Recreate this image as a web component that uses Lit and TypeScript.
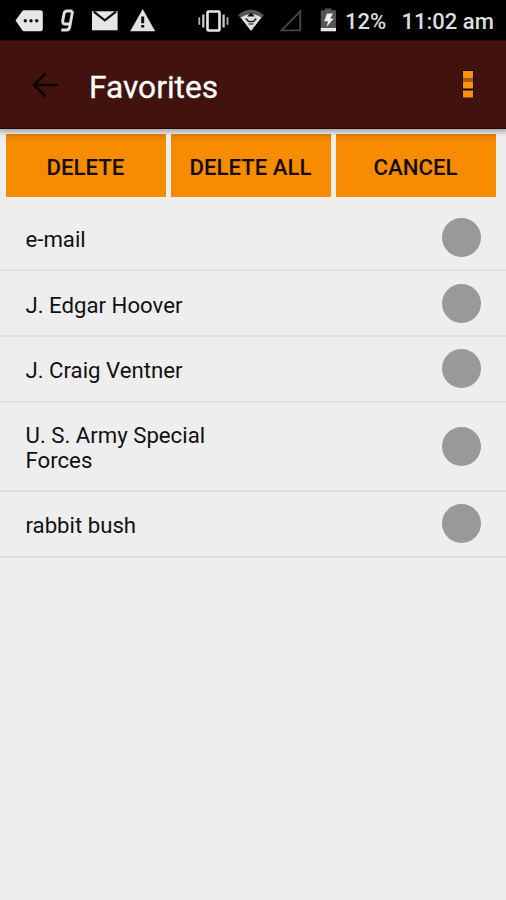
import { LitElement, html, css, svg } from "lit";
import { customElement, property } from "lit/decorators.js";

@customElement("status-bar")
class StatusBar extends LitElement {
  static styles = css`
    :host {
      display: flex;
      height: 40px;
      background: #000;
      color: #dedede;
      font: 500 22px/40px Roboto, sans-serif;
    }
    svg { display: block; flex: none; }
    .left { width: 190px; }
    .right { width: 155px; }
    .battery,
    .time {
      box-sizing: border-box;
      height: 40px;
      padding-top: 3px;
      line-height: 38px;
      white-space: nowrap;
    }
    .battery { width: 56.500px; }
  `;

  private notifications() {
    return svg`
      <path d="M15.500 20.500 L22.500 10.800 Q23 10.300 24 10.300 H40.500 Q42.800 10.300 42.800 12.500 V29 Q42.800 31.200 40.500 31.200 H24 Q23 31.200 22.500 30.500 Z" fill="#e6e6e6"/>
      <circle cx="25.300" cy="20.700" r="1.700" fill="#111"/>
      <circle cx="31" cy="20.700" r="1.700" fill="#111"/>
      <circle cx="36.700" cy="20.700" r="1.700" fill="#111"/>
      <path d="M72.600 11 H67 Q64.500 11 64 14 L62.800 20.500 Q62.300 24 65 24 H70.300 M72.600 11 L69.700 27 Q69.100 30 66.500 30 H61.300" fill="none" stroke="#e0e0e0" stroke-width="2.900"/>
      <rect x="92" y="11.300" width="25.600" height="19" fill="#e6e6e6"/>
      <path d="M93.700 11.700 L104.800 20.300 L116 11.700" fill="none" stroke="#111" stroke-width="2.300"/>
      <path d="M142.700 9.500 L154.800 31 H130.600 Z" fill="#e4e4e4" stroke="#e4e4e4" stroke-width=".5"/>
      <path d="M142.700 16.500 V23.300 M142.700 25 V27.500" stroke="#111" stroke-width="3"/>`;
  }

  private system() {
    return svg`
      <rect x="207.500" y="11.500" width="12" height="19" rx="1" fill="none" stroke="#e6e6e6" stroke-width="2.600"/>
      <path d="M203.300 14.500 V27.500 M223.600 14.500 V27.500" stroke="#c8c8c8" stroke-width="2.300"/>
      <path d="M199.300 17.300 V24.700 M227.500 17.300 V24.700" stroke="#b5b5b5" stroke-width="1.800"/>
      <path d="M238 15 Q251 4.500 264 15 L261.300 18 Q251 10.500 240.700 18 Z" fill="#575757"/>
      <path d="M240.500 17.500 Q251 10.500 261.500 17.500 L251 31 Z" fill="#dedede"/>
      <path d="M251 12.500 L254.800 16.500 H247.200 Z" fill="#111"/>
      <path d="M245.800 18.500 L248.500 21.500 H253.500 L256.200 18.500" fill="none" stroke="#222" stroke-width="1.600"/>
      <path d="M248.500 24 H253.500" stroke="#333" stroke-width="1.200"/>
      <path d="M281.500 30.400 L300.200 11.300 V30.400 Z" fill="none" stroke="#464646" stroke-width="1.900"/>
      <path d="M325 10.300 V8.500 H331.500 V10.300 H336 V30.800 H320.800 V10.300 Z" fill="#555"/>
      <rect x="320.800" y="28" width="15.200" height="3.300" fill="#e8e8e8"/>
      <path d="M327 13.500 H333 L330.200 18.600 H333.700 L326.500 27 L328 21.300 H324.200 Z" fill="#f0f0f0"/>`;
  }

  render() {
    return html`
      <svg class="left" width="190" height="40" viewBox="0 0 190 40">${this.notifications()}</svg>
      <svg class="right" width="155" height="40" viewBox="190 0 155 40">${this.system()}</svg>
      <span class="battery">12%</span>
      <span class="time">11:02 am</span>
    `;
  }
}

@customElement("app-toolbar")
class AppToolbar extends LitElement {
  @property() heading = "";

  static styles = css`
    :host {
      display: flex;
      align-items: center;
      box-sizing: border-box;
      height: 89px;
      padding: 0 31px 0 31px;
      background: #42130e;
      border-top: 1px solid #2c0a07;
      border-bottom: 1px solid #240604;
      box-shadow: 0 1px 5px 2px rgba(0, 0, 0, 0.3);
      position: relative;
    }
    .title {
      margin: 7px auto 0 31px;
      color: #fff;
      font: 400 31.700px/36px Roboto, sans-serif;
      -webkit-text-stroke: 0.3px #fff;
    }
    svg { display: block; }
  `;

  render() {
    return html`
      <svg width="27" height="28" viewBox="0 0 27 28">
        <path d="M26.500 14 H3.500 M14.500 2.500 L3 14 L14.500 25.500" fill="none" stroke="#0c0302" stroke-width="2.500"/>
      </svg>
      <span class="title">${this.heading}</span>
      <svg width="14" height="32" viewBox="0 0 14 32">
        <rect x="1" y="1" width="12" height="28" fill="#1c0604"/>
        <rect x="2" y="2" width="10" height="7.500" fill="#fa930b"/>
        <rect x="2" y="9.500" width="10" height="3" fill="#ad5b08"/>
        <rect x="2" y="12.500" width="10" height="7" fill="#fa930b"/>
        <rect x="2" y="21.500" width="10" height="7" fill="#fa930b"/>
      </svg>
    `;
  }
}

@customElement("favorite-row")
class FavoriteRow extends LitElement {
  @property() label = "";

  static styles = css`
    :host {
      display: flex;
      align-items: center;
      justify-content: space-between;
      box-sizing: border-box;
      padding: 0 25px 0 25.500px;
      border-bottom: 2px solid #dedede;
    }
    .label {
      width: 200px;
      padding-top: 4px;
      color: #111;
      font: 400 22.200px/25px Roboto, sans-serif;
    }
    .dot {
      width: 39px;
      height: 39px;
      border-radius: 50%;
      background: #999;
    }
  `;

  render() {
    return html`<span class="label">${this.label}</span><span class="dot"></span>`;
  }
}

@customElement("app-root")
class AppRoot extends LitElement {
  private actions = ["DELETE", "DELETE ALL", "CANCEL"];
  private favorites = [
    { label: "e-mail", height: 66 },
    { label: "J. Edgar Hoover", height: 65.5 },
    { label: "J. Craig Ventner", height: 66 },
    { label: "U. S. Army Special Forces", height: 89 },
    { label: "rabbit bush", height: 66 },
  ];

  static styles = css`
    :host {
      display: block;
      height: 900px;
      overflow: hidden;
      background: #eee;
    }
    .actions {
      display: grid;
      grid-template-columns: repeat(3, 1fr);
      gap: 5.300px;
      padding: 5px 10px 0 6px;
      height: 63px;
    }
    .action {
      border: 0;
      padding: 2px 1px 0 0;
      background: linear-gradient(#e47f05, #f78c00 9px);
      color: #150c00;
      font: 500 22.200px/26px Roboto, sans-serif;
    }
    .list { padding-top: 8.400px; }
  `;

  render() {
    return html`
      <status-bar></status-bar>
      <app-toolbar heading="Favorites"></app-toolbar>
      <div class="actions">
        ${this.actions.map((name) => html`<button class="action">${name}</button>`)}
      </div>
      <div class="list">
        ${this.favorites.map(
          (item) => html`<favorite-row label=${item.label} style="height:${item.height}px"></favorite-row>`
        )}
      </div>
    `;
  }
}
